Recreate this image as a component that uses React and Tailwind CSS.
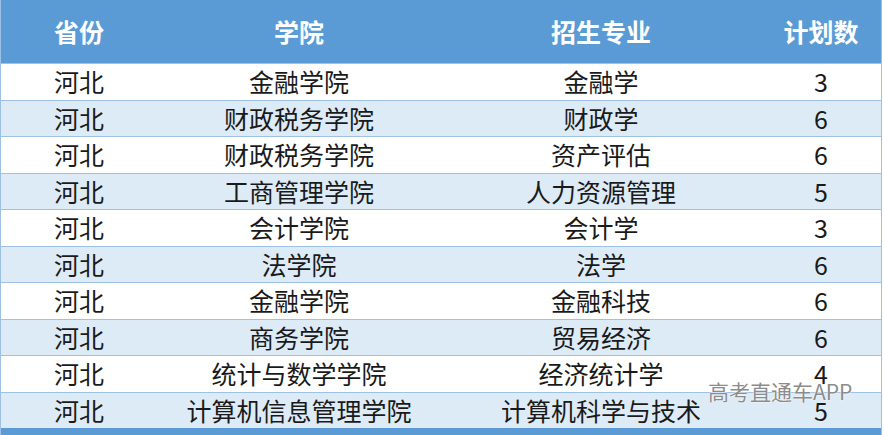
import React from "react";

const rows = [
  ["河北", "金融学院", "金融学", "3"],
  ["河北", "财政税务学院", "财政学", "6"],
  ["河北", "财政税务学院", "资产评估", "6"],
  ["河北", "工商管理学院", "人力资源管理", "5"],
  ["河北", "会计学院", "会计学", "3"],
  ["河北", "法学院", "法学", "6"],
  ["河北", "金融学院", "金融科技", "6"],
  ["河北", "商务学院", "贸易经济", "6"],
  ["河北", "统计与数学学院", "经济统计学", "4"],
  ["河北", "计算机信息管理学院", "计算机科学与技术", "5"],
];

const font = { fontFamily: '"Noto Sans CJK SC", "Noto Sans", sans-serif' };

export default function App() {
  return (
    <div className="relative w-[884px] h-[435px] bg-white overflow-hidden" style={font}>
      <div className="w-[882px] flex flex-col border-x border-[#9dc0e4]">
        <div className="grid grid-cols-[156px_284px_320px_120px] h-[63px] bg-[#5b9bd5] text-white font-bold text-[25px] items-center text-center">
          <div>省份</div>
          <div>学院</div>
          <div>招生专业</div>
          <div>计划数</div>
        </div>
        {rows.map((r, i) => (
          <div
            key={i}
            className={
              "grid grid-cols-[156px_284px_320px_120px] h-[36.5px] items-center text-center text-[25px] leading-none text-[#1a1a1a] border-t border-[#9ec2e6] " +
              (i % 2 === 0 ? "bg-white" : "bg-[#ddebf7]")
            }
          >
            <div>{r[0]}</div>
            <div>{r[1]}</div>
            <div>{r[2]}</div>
            <div>{r[3]}</div>
          </div>
        ))}
        <div className="h-[8px] bg-[#5b9bd5]" />
      </div>
      <div
        className="absolute left-[708px] top-[381px] text-[21px] leading-none text-[#8c8c8c] whitespace-nowrap"
        style={{ textShadow: "0 0 2px #ffffff, 0 0 1px #ffffff" }}
      >
        高考直通车APP
      </div>
    </div>
  );
}
